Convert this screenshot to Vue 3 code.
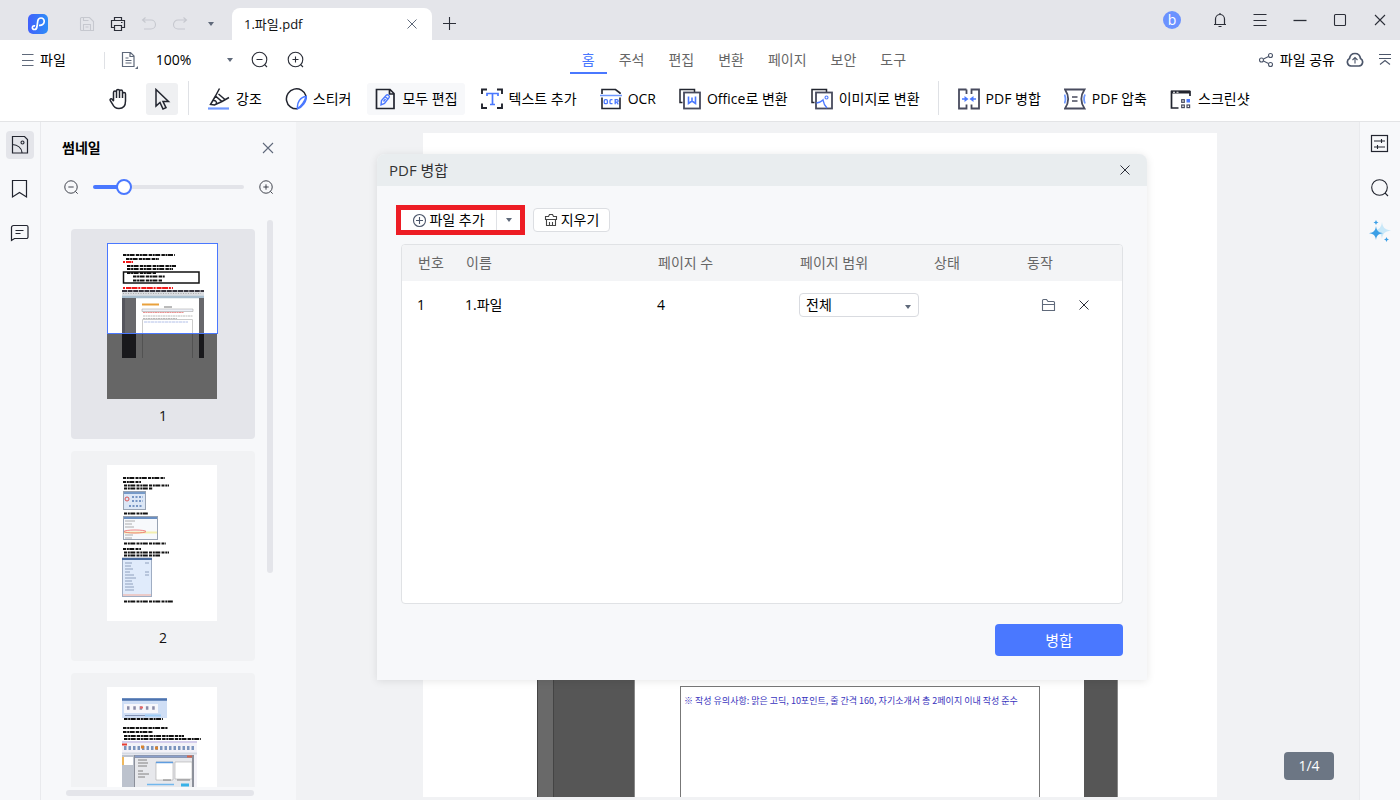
<script setup>
import { h, ref, computed } from 'vue'

const icons = {
  logo: '<defs><linearGradient id="lg" x1="0" y1="0" x2="1" y2="0"><stop offset="0" stop-color="#4160fb"/><stop offset="1" stop-color="#2d8df8"/></linearGradient></defs><rect width="20" height="20" rx="5" fill="url(#lg)" stroke="none"/><path d="M11 11.300c2.800.4 5-1.200 5.200-3.600.2-2.200-1.300-3.700-3.200-3.700-1.800 0-2.900 1.100-3.200 2.900L8.900 13c-.3 1.700-1.200 2.600-2.600 2.500-1.300-.1-2.100-1-1.900-2.100.2-1.200 1.400-1.800 2.700-1.500" stroke="#fff" stroke-width="1.700"/>',
  save: '<path d="M1.500 2.500a1 1 0 0 1 1-1h8l4 4v9h-12a1 1 0 0 1-1-1zM4.500 1.500v3h5M4.500 14.500v-6h7v6M6.500 11h3"/>',
  print: '<path d="M4.500 4.500v-3h7v3M4.500 11.500h-3v-7h13v7h-3M4.500 9.500h7v5h-7z" stroke-width="1.200"/><path d="M11 6.500h1.500"/>',
  undo: '<path d="M4.500 1.500l-3 2.500 3 2.500M1.500 4h8.500a4.500 4.500 0 0 1 0 9H3"/>',
  redo: '<path d="M11.500 1.500l3 2.500-3 2.500M14.500 4H6a4.500 4.500 0 0 0 0 9h7"/>',
  caret: '<path d="M1 2h6L4 6z" fill="currentColor" stroke="none"/>',
  close: '<path d="M3.500 3.500l9 9M12.500 3.500l-9 9" stroke-width="1"/>',
  closeLg: '<path d="M3 3l10 10M13 3L3 13"/>',
  plus: '<path d="M7.500 1v13M1 7.500h13"/>',
  bell: '<path d="M2 12.500h12M3.500 12.500V7a4.500 4.500 0 0 1 9 0v5.500M8 2.500V1M6.500 14.500h3" stroke-width="1.200"/>',
  menu: '<path d="M1.500 2.500h13M1.500 8.500h13M1.500 13.500h13" stroke-width="1.100"/>',
  menuSm: '<path d="M2 2.500h11.500M2 8.500h11.500M2 13.500h11.500"/>',
  min: '<path d="M1.500 8.500h13" stroke-width="1.300"/>',
  max: '<rect x="2.500" y="2.500" width="11" height="11" rx="1"/>',
  doc: '<path d="M1.500 1.500h8l3.500 3.500v10.500h-11.500zM9 1.500V5.500h4M4.500 7h3M4.500 9.500h6M4.500 12h6" stroke-width="1.200"/><path d="M17 15v3h-3z" fill="currentColor" stroke="none"/>',
  zoomOut: '<circle cx="8.500" cy="8.500" r="7.300"/><path d="M5.500 8.500h6M13.500 13.500l2.500 2.500"/>',
  zoomIn: '<circle cx="8.500" cy="8.500" r="7.300"/><path d="M5.500 8.500h6M8.500 5.500v6M13.500 13.500l2.500 2.500"/>',
  share: '<circle cx="3.500" cy="8" r="2"/><circle cx="12.500" cy="3.500" r="2"/><circle cx="12.500" cy="12.500" r="2"/><path d="M5.500 7l5-2.500M5.500 9l5 2.500"/>',
  cloud: '<path d="M5 15a4 4 0 0 1-1.500-7.500C4 4.300 6.300 2.500 9 2.500s5 1.800 5.500 5A4 4 0 0 1 13 15z" stroke-width="1.700"/><path d="M9 12.500V7M6.500 9L9 6.500 11.500 9"/>',
  collapse: '<path d="M2 2.500h12M2 6.500h12M3 12.500l5-4 5 4"/>',
  hand: '<path d="M5.500 13V4.500a1.500 1.500 0 0 1 3 0V10M8.500 9V3a1.500 1.500 0 0 1 3 0v7M11.500 9V3.500a1.500 1.500 0 0 1 3 0V10M14.500 9V6a1.500 1.500 0 0 1 3 0v7c0 4.500-2 7.500-6.500 7.500-3.500 0-5.500-2-6.500-4.500l-2.300-3.500c-.6-1.600 1-2.300 2-1.200l1.500 2" stroke-width="1.500"/>',
  cursor: '<path d="M5 1.500v16.500l4-3.500 3 6.500 3-1.300-3-6.200h5.500z" stroke-width="1.500"/>',
  highlight: '<path d="M11.500.500L7.500 8l6.500 5.500L21 9.500M7.500 8l-5 8.500 4 .5 7.500-3.500M10.500 6l7 6M5 12.500c2.500-.5 4.500 1.500 3 4" stroke-width="1.500"/><path d="M0 20.500h21" stroke="#6f98ff" stroke-width="2.200"/>',
  sticker: '<path d="M21 8A10 10 0 1 0 12.500 20.800" stroke-width="1.500"/><path d="M21.500 8.500c0 5-4.500 11-9 12.300-.8-5.800 2.500-12 9-12.300zM21 9c-1.500 4.500-4.500 9-8.500 11.500" stroke="#4a78ff" stroke-width="1.500"/>',
  editAll: '<path d="M2.500 1.500h13.500l4 4v15h-17.500zM15.500 1.500v4.500h4.500" stroke-width="1.700"/><path d="M7 17l.5-4.500 5-5.500c1-1 3.500 1 2.700 2.300L10.500 15.500zM11 8.500l3.500 3M9.500 13.500l2-2.500" stroke="#4a78ff" stroke-width="1.400"/>',
  text: '<path d="M1 6V1.500h5M16 1.500h5V6M21 15.500V20h-5M6 20H1v-4.500" stroke-width="1.900"/><path d="M6 8V5.500h11V8M11.500 5.500v11M9 16.500h5" stroke="#4a78ff" stroke-width="1.700"/>',
  ocr: '<path d="M2 6V1.500h13.500L20 5v1M2 9.500V20.500h18V9.500" stroke-width="1.600"/><path d="M0 7.500h22" stroke="#6f98ff" stroke-width="1.500"/><g stroke="#4a78ff" stroke-width="1.300"><rect x="4.200" y="11.700" width="3.200" height="4" rx="1.200"/><path d="M12.500 11.700h-1.500q-1 0-1 1v2q0 1 1 1h1.500M15.200 16.300v-4.600h1.800q1.200.1 1.200 1.200t-1.200 1.200h-1.800M16.600 14.200l1.700 2.100"/></g>',
  office: '<path d="M3.500 14.500H1v-13h14.500V4" stroke-width="1.500"/><rect x="5" y="4.500" width="16" height="16" stroke="#484b5e" stroke-width="1.800"/><path d="M9.500 8.500v7l3.500-2.500 3.500 2.500v-7M13 13V9.500" stroke="#4a78ff" stroke-width="1.600"/>',
  image: '<path d="M3.500 14.500H1v-13h14.500V4" stroke-width="1.500"/><rect x="5" y="4.500" width="16" height="16" stroke="#484b5e" stroke-width="1.800"/><path d="M5.500 15c3-.5 5-1.500 6.500-3 .5 3 1.500 5.500 4 8" stroke="#4a78ff" stroke-width="1.400"/><circle cx="15.500" cy="9.500" r="1.500" stroke="#4a78ff"/>',
  merge: '<path d="M8.500 1.500H1v19h7.500v-4M8.500 6V1.500M13.500 6V1.500H21v19h-7.500v-4" stroke="#484b5e" stroke-width="1.800"/><path d="M4 11h4M18 11h-4" stroke="#4a78ff" stroke-width="1.600"/><path d="M6.500 8l4 3-4 3zM15.500 8l-4 3 4 3z" fill="#4a78ff" stroke="none"/>',
  compress: '<path d="M1 1.500h19.500c-4 6-4 13 0 19H1c4-6 4-13 0-19z" stroke="#484b5e" stroke-width="1.800"/><path d="M8 9h5.500M8 13h5.500" stroke="#484b5e" stroke-width="1.500"/><path d="M.5 6.500c1.300 3 1.300 6 0 9M21 6.500c-1.300 3-1.300 6 0 9" stroke="#6f98ff" stroke-width="1.800"/>',
  screenshot: '<path d="M8.500 20H1.500V3.500h18.500V8" stroke-width="1.700"/><path d="M1 4h19" stroke-width="3"/><path d="M3 4.200h2M6.500 4.200h2" stroke="#fff"/><g stroke="#484b5e" stroke-width="1.200"><rect x="11.700" y="11.700" width="2.600" height="2.600"/><rect x="11.700" y="17" width="2.600" height="2.600"/><rect x="17" y="17" width="2.600" height="2.600"/></g><path d="M16.500 11h3.500v3.500h-3.500z" fill="#4a78ff" stroke="none"/>',
  thumbs: '<path d="M2.500 1.500h12l3 3v13.500h-15zM2.500 9.500c5 .5 9 3.500 9.500 8" stroke-width="1.200"/><circle cx="12.500" cy="7.500" r="1.500"/>',
  bookmark: '<path d="M2.500 1.500h14v16.500l-7-4.500-7 4.500z" stroke-width="1.200"/>',
  comment: '<path d="M1.500 17.500v-13a2 2 0 0 1 2-2h13a1.500 1.500 0 0 1 1.500 1.500v10a1.500 1.500 0 0 1-1.500 1.500h-12zM5.500 7.500h8M5.500 10.500h5" stroke-width="1.200"/>',
  props: '<rect x="1.500" y="1.500" width="16" height="16" stroke-width="1.200"/><path d="M4 7h11M11.500 5v4M4 13h11M7.500 11v4"/>',
  search: '<circle cx="9.500" cy="9.500" r="7.800"/><path d="M15 15l3 3"/>',
  sparkle: '<path d="M14 2c.8 5.500 2.500 7.500 9 8.500-6.500 1-8.200 3-9 8.500-.8-5.500-2.500-7.500-8-8.500 5.500-1 7.200-3 8-8.500z" fill="#c9e8f8" stroke="none"/><path d="M8 6c.6 4.500 2 6.500 7 7.200-5 .8-6.400 2.500-7 6.800-.6-4.300-2-6-7-6.800 5-.7 6.400-2.700 7-7.200zM8 0l.8 1.700 1.700.8-1.700.8L8 5l-.8-1.700-1.700-.8 1.700-.8zM18.500 17l.8 1.700 1.700.8-1.700.8-.8 1.700-.8-1.700-1.700-.8 1.700-.8z" fill="#3b9fe6" stroke="none"/>',
  addFile: '<circle cx="7.500" cy="7.500" r="6"/><path d="M4 7.500h7M7.500 4v7"/>',
  clear: '<path d="M2.500 6.500h9v6h-9zM1.500 6.500v-3h3l1-2h3l1 2h3v3zM5.500 9v3.500M8.500 9v3.500"/>',
  folder: '<path d="M1.500 12.500v-10a1 1 0 0 1 1-1h3l1.500 2h5.500a1 1 0 0 1 1 1v8zM1.500 6.500h12"/>'
}

const Icon = (p) =>
  h('svg', {
    width: p.size,
    height: p.size,
    viewBox: `0 0 ${p.size} ${p.size}`,
    fill: 'none',
    stroke: 'currentColor',
    'stroke-width': 1.1,
    'aria-hidden': 'true',
    innerHTML: icons[p.name]
  })
Icon.props = ['name', 'size']

const tabs = ['홈', '주석', '편집', '변환', '페이지', '보안', '도구']
const editTools = [
  ['highlight', '강조'],
  ['sticker', '스티커'],
  ['editAll', '모두 편집'],
  ['text', '텍스트 추가'],
  ['ocr', 'OCR'],
  ['office', 'Office로 변환'],
  ['image', '이미지로 변환']
]
const fileTools = [
  ['merge', 'PDF 병합'],
  ['compress', 'PDF 압축'],
  ['screenshot', '스크린샷']
]
const zoom = ref(17)
const track = computed(() => ({
  background: `linear-gradient(to right, #4a78ff ${zoom.value}%, #e3e4e9 ${zoom.value}%)`
}))
const range = ref('all')

/* miniature text lines: x, y, length, colour */
const lines1 = [
  [16, 12, 52], [19, 16, 33], [20, 23, 49], [20, 26, 46], [20, 30, 29], [26, 33.500, 32], [26, 37.500, 29]
]
const red1 = [[16, 19, 10], [16, 45, 50]]
const lines2 = [
  [16, 13, 42], [16, 17, 18], [17, 20.500, 45], [17, 23.500, 29], [17, 48.500, 24], [17, 78.500, 42],
  [16, 84, 18], [17, 87.500, 45], [17, 90.500, 36], [17, 136.500, 49]
]
const lines3 = [[17, 32, 39], [16, 41, 45], [16, 45, 30], [17, 49, 60], [17, 52, 77]]
</script>

<template>
  <div class="app">
    <header class="titlebar">
      <Icon class="logo" name="logo" :size="20" />
      <div class="quick">
        <button class="ib off" aria-label="저장"><Icon name="save" :size="16" /></button>
        <button class="ib" aria-label="인쇄"><Icon name="print" :size="16" /></button>
        <button class="ib off" aria-label="실행 취소"><Icon name="undo" :size="16" /></button>
        <button class="ib off" aria-label="다시 실행"><Icon name="redo" :size="16" /></button>
        <button class="ib slate" aria-label="더 보기"><Icon name="caret" :size="8" /></button>
      </div>
      <div class="doc-tab">
        <span>1.파일.pdf</span>
        <button class="ib slate" aria-label="탭 닫기"><Icon name="close" :size="16" /></button>
      </div>
      <button class="ib new-tab" aria-label="새 탭"><Icon name="plus" :size="16" /></button>
      <div class="window">
        <button class="avatar">b</button>
        <button class="ib" aria-label="알림"><Icon name="bell" :size="16" /></button>
        <button class="ib" aria-label="메뉴"><Icon name="menu" :size="16" /></button>
        <button class="ib" aria-label="최소화"><Icon name="min" :size="16" /></button>
        <button class="ib" aria-label="최대화"><Icon name="max" :size="16" /></button>
        <button class="ib" aria-label="닫기"><Icon name="closeLg" :size="16" /></button>
      </div>
    </header>

    <div class="menubar">
      <button class="file slate"><Icon name="menuSm" :size="16" /><span>파일</span></button>
      <i class="sep short"></i>
      <button class="ib slate" aria-label="페이지 보기"><Icon name="doc" :size="18" /></button>
      <button class="zoom-value"><span>100%</span><Icon name="caret" :size="8" /></button>
      <button class="ib" aria-label="축소"><Icon name="zoomOut" :size="18" /></button>
      <button class="ib" aria-label="확대"><Icon name="zoomIn" :size="18" /></button>
      <nav class="tabs">
        <a v-for="(t, i) in tabs" :key="t" href="#" :class="{ on: i === 0 }">{{ t }}</a>
      </nav>
      <div class="share slate">
        <button class="tool"><Icon name="share" :size="16" /><span>파일 공유</span></button>
        <button class="ib" aria-label="클라우드"><Icon name="cloud" :size="18" /></button>
        <button class="ib" aria-label="접기"><Icon name="collapse" :size="16" /></button>
      </div>
    </div>

    <div class="toolbar">
      <button class="mode" aria-label="손 도구"><Icon name="hand" :size="22" /></button>
      <button class="mode on" aria-label="선택 도구"><Icon name="cursor" :size="22" /></button>
      <i class="sep"></i>
      <div class="tools">
        <button v-for="[icon, label] in editTools" :key="icon" class="tool" :class="{ lit: icon === 'editAll' }">
          <Icon :name="icon" :size="22" /><span>{{ label }}</span>
        </button>
      </div>
      <i class="sep"></i>
      <div class="tools">
        <button v-for="[icon, label] in fileTools" :key="icon" class="tool">
          <Icon :name="icon" :size="22" /><span>{{ label }}</span>
        </button>
      </div>
    </div>

    <main class="body">
      <aside class="rail">
        <button class="on" aria-label="썸네일"><Icon name="thumbs" :size="20" /></button>
        <button aria-label="책갈피"><Icon name="bookmark" :size="20" /></button>
        <button aria-label="댓글"><Icon name="comment" :size="20" /></button>
      </aside>

      <section class="panel">
        <div class="panel-head">
          <h2>썸네일</h2>
          <button class="ib slate" aria-label="패널 닫기"><Icon name="closeLg" :size="16" /></button>
        </div>
        <div class="slider">
          <button class="ib" aria-label="썸네일 축소"><svg width="16" height="16" viewBox="0 0 18 18" fill="none" stroke="currentColor"><circle cx="9" cy="9" r="7" /><path d="M6 9h6M14 14l2.500 2.500" /></svg></button>
          <input v-model="zoom" type="range" min="0" max="100" aria-label="썸네일 크기" :style="track" />
          <button class="ib" aria-label="썸네일 확대"><svg width="16" height="16" viewBox="0 0 18 18" fill="none" stroke="currentColor"><circle cx="9" cy="9" r="7" /><path d="M6 9h6M9 6v6M14 14l2.500 2.500" /></svg></button>
        </div>
        <div class="thumbs">
          <div class="card on">
            <svg class="mini" width="112" height="156" viewBox="0 0 112 156">
              <rect width="110" height="156" fill="#fff" />
              <g stroke="#111" stroke-width="2" stroke-dasharray="3.500 .6 2 .5 5 1.200">
                <path v-for="l in lines1" :key="l[1]" :d="`M${l[0]} ${l[1]}h${l[2]}`" />
              </g>
              <g stroke="#f01818" stroke-width="2.200" stroke-dasharray="2 1 5 .5 6 .8">
                <path v-for="l in red1" :key="l[1]" :d="`M${l[0]} ${l[1]}h${l[2]}`" />
              </g>
              <rect x="16.500" y="29" width="75.500" height="11" fill="none" stroke="#111" stroke-width="1.500" />
              <rect x="15" y="47" width="82" height="68" fill="#fff" />
              <path d="M15 48h82" stroke="#393842" stroke-width="2" stroke-dasharray="5 .6" />
              <path d="M15 51h82" stroke="#dadde2" stroke-width="4" />
              <path d="M16 50.500h78" stroke="#aaa" stroke-width="1" stroke-dasharray="1 1.500" />
              <path d="M15 54h82" stroke="#a9bfd0" stroke-width="2.500" />
              <path d="M15 55h14v60H15z" fill="#55555d" />
              <path d="M18 55h11v60H18zM92 55h5v60h-5z" fill="#68686c" />
              <path d="M15 91h14v24H15zM92 91h5v24h-5z" fill="#403f46" />
              <path d="M35 61.500h17" stroke="#e9a13c" stroke-width="2" />
              <path d="M57 64h8" stroke="#777" />
              <path d="M35 66h51v2.500H35z" fill="#eef1fa" stroke="#999" stroke-width=".5" />
              <path d="M36 69.500h41" stroke="#e57777" stroke-width=".8" stroke-dasharray="2 .4" />
              <path d="M36 73h50M36 75.500h34" stroke="#aaa" stroke-width=".8" stroke-dasharray="2 .5" />
              <path d="M35.500 115V76.500h50V115" fill="none" stroke="#ccc" />
              <path d="M37 79h44" stroke="#9fb0e3" stroke-width=".8" stroke-dasharray="3 .5" />
              <path d="M0 91h110v65H0z" fill="#000" opacity=".6" />
              <rect x=".5" y=".5" width="110" height="90" fill="none" stroke="#4a78ff" />
            </svg>
            <span>1</span>
          </div>
          <div class="card">
            <svg class="mini" width="112" height="156" viewBox="0 0 112 156">
              <rect width="110" height="156" fill="#fff" />
              <g stroke="#111" stroke-width="2" stroke-dasharray="3 .8 2 .5 5 1.200">
                <path v-for="l in lines2" :key="l[1]" :d="`M${l[0]} ${l[1]}h${l[2]}`" />
              </g>
              <rect x="16.500" y="26.500" width="22" height="18" fill="#dce7f6" stroke="#98a3b3" />
              <path d="M17 28h21" stroke="#5580b8" stroke-width="1.500" />
              <path d="M25 32h11M25 36h11M22 41h14" stroke="#7695c4" stroke-dasharray="2 1.500" stroke-width="2" />
              <circle cx="20" cy="34" r="2" fill="none" stroke="#d55" />
              <rect x="16.500" y="51.500" width="34" height="23" fill="#f7f9fc" stroke="#98a3b3" />
              <path d="M17 53h33" stroke="#6a8fc2" stroke-width="2" />
              <path d="M18 56h10M18 59h7M18 62h9M18 70h8M18 73h7" stroke="#999" stroke-width=".8" />
              <path d="M17 67.500h33" stroke="#f3efb0" stroke-width="2" />
              <ellipse cx="28" cy="66.500" rx="11" ry="1.500" fill="none" stroke="#e66" stroke-width=".8" />
              <rect x="15.500" y="93" width="29" height="38.500" fill="#e0ebfb" stroke="#9fadc3" />
              <path d="M15 94h30" stroke="#47699c" stroke-width="2" />
              <path d="M18 98h7M18 101h6M18 104h8M18 107h5M18 110h9M18 113h11M18 116h7M18 119h8M18 122h9M18 125h9M38 98h4M38 107h4M38 110h4" stroke="#8797b5" stroke-width=".9" />
              <path d="M16 130h28" stroke="#efc0b8" stroke-width="1.500" />
            </svg>
            <span>2</span>
          </div>
          <div class="card">
            <svg class="mini" width="112" height="156" viewBox="0 0 112 156">
              <rect width="110" height="156" fill="#fff" />
              <rect x="15" y="11" width="45" height="20" fill="#cfdef5" />
              <path d="M15 12.500h45" stroke="#4d73ae" stroke-width="2.500" />
              <rect x="17" y="17" width="34" height="9" fill="#f7f7fb" />
              <path d="M20 21h28" stroke="#8a8ca8" stroke-width="3.500" stroke-dasharray="2.500 3.800" />
              <path d="M33 20.500h3" stroke="#e66" stroke-width="2" />
              <path d="M18 28.500h20" stroke="#8494b5" /><path d="M38 28.500h16" stroke="#9ccbf5" stroke-width="2" />
              <g stroke="#111" stroke-width="2" stroke-dasharray="3.500 .7 2 .5 5 1">
                <path v-for="l in lines3" :key="l[1]" :d="`M${l[0]} ${l[1]}h${l[2]}`" />
              </g>
              <rect x="15" y="54" width="75" height="102" fill="#f3f2f8" />
              <path d="M15 55h75" stroke="#d4cdec" stroke-width="2" /><path d="M15 57.500h5" stroke="#e53e32" stroke-width="2" />
              <path d="M17 61h70" stroke="#7c94bd" stroke-width="4" stroke-dasharray="2.500 2" />
              <path d="M34 60h3M48 61h3" stroke="#d9822e" stroke-width="3" />
              <path d="M15 66.500h75" stroke="#d5dae3" stroke-width="2" />
              <path d="M15 68h12v88H15z" fill="#bcc2cd" /><path d="M15 70h11v8H15z" fill="#fff" /><path d="M15 70h2v8h-2z" fill="#eeb85e" />
              <path d="M27 68h60v88H27z" fill="#8b8f9a" /><path d="M28 69.500h57" stroke="#8b9fca" stroke-width="2" />
              <path d="M80 69.500h5" stroke="#d9654a" stroke-width="2" />
              <path d="M28 71h57v85H28z" fill="#e7e8ec" />
              <path d="M49 75h17v18H49zM68 75h17v17H68z" fill="#fff" stroke="#999" stroke-width=".5" />
              <path d="M49 75.500h17" stroke="#5e9de0" stroke-width="1.500" />
              <path d="M31 73h9M31 76h10M31 79h9M31 84h5M31 87h11M31 90h7M56 93h8M70 93h13" stroke="#777" stroke-width=".9" />
              <path d="M40 97.500h27" stroke="#71b7ed" stroke-width="1.500" /><path d="M74 98h8" stroke="#38b2e8" stroke-width="3" />
            </svg>
          </div>
        </div>
        <i class="vbar"></i>
        <i class="hbar"></i>
      </section>

      <section class="canvas">
        <div class="page">
          <div class="shot">
            <i class="ruler"></i><i class="dark left"></i>
            <p>※ 작성 유의사항: 맑은 고딕, 10포인트, 줄 간격 160, 자기소개서 총 2페이지 이내 작성 준수</p>
            <i class="dark right"></i>
          </div>
        </div>
        <div class="pager">1/4</div>
      </section>

      <aside class="rail end">
        <button aria-label="속성"><Icon name="props" :size="19" /></button>
        <button aria-label="검색"><Icon name="search" :size="19" /></button>
        <button aria-label="AI"><Icon name="sparkle" :size="23" /></button>
      </aside>

      <div class="dialog" role="dialog" aria-labelledby="dlg-title">
        <div class="dlg-head">
          <h1 id="dlg-title">PDF 병합</h1>
          <button class="ib" aria-label="대화 상자 닫기"><Icon name="close" :size="16" /></button>
        </div>
        <div class="dlg-body">
          <div class="actions">
            <div class="split">
              <button class="add"><Icon name="addFile" :size="15" /><span>파일 추가</span></button>
              <button class="more slate" aria-label="추가 옵션"><Icon name="caret" :size="8" /></button>
            </div>
            <button class="clear"><Icon name="clear" :size="14" /><span>지우기</span></button>
          </div>
          <div class="sheet">
            <table>
              <colgroup><col class="c1" /><col class="c2" /><col class="c3" /><col class="c4" /><col class="c5" /><col /></colgroup>
              <thead>
                <tr><th>번호</th><th>이름</th><th>페이지 수</th><th>페이지 범위</th><th>상태</th><th>동작</th></tr>
              </thead>
              <tbody>
                <tr>
                  <td>1</td>
                  <td>1.파일</td>
                  <td>4</td>
                  <td>
                    <div class="select slate">
                      <select v-model="range" aria-label="페이지 범위"><option value="all">전체</option></select>
                      <Icon name="caret" :size="8" />
                    </div>
                  </td>
                  <td></td>
                  <td>
                    <div class="row-actions">
                      <button class="ib slate" aria-label="폴더 열기"><Icon name="folder" :size="15" /></button>
                      <button class="ib" aria-label="삭제"><Icon name="close" :size="16" /></button>
                    </div>
                  </td>
                </tr>
              </tbody>
            </table>
          </div>
          <div class="foot"><button class="primary">병합</button></div>
        </div>
      </div>
    </main>
  </div>
</template>

<style>
body { overflow: hidden; }
</style>

<style scoped>
* { box-sizing: border-box; }
.app {
  height: 100vh; display: flex; flex-direction: column; background: #fff; color: #111;
  font: 14px/20px "Open Sans", "Noto Sans CJK KR", sans-serif;
}
button, select { font: inherit; color: inherit; background: none; border: 0; padding: 0; }
button { display: flex; align-items: center; justify-content: center; white-space: nowrap; }
svg { flex: none; display: block; }
.ib { width: 20px; height: 20px; flex: none; color: #2b2e38; }
.ib.slate, .slate { color: #5f697a; }
.slate .ib { color: #4c566a; }
.ib.off { color: #c6c8cf; }
h1, h2, p { margin: 0; font-weight: 400; }

.titlebar { height: 40px; flex: none; display: flex; align-items: center; background: #e4e5ea; padding-left: 28px; }
.logo { margin-top: 7px; }
.quick { display: flex; align-items: center; gap: 11px; margin: 8px 0 0 29px; }
.doc-tab {
  align-self: flex-end; width: 200px; height: 32px; margin-left: 11px; padding: 0 10px 0 12px; border-radius: 8px 8px 0 0;
  background: #fff; display: flex; align-items: center; justify-content: space-between; font-size: 13px;
}
.new-tab { margin: 7px 0 0 8px; }
.window { margin-left: auto; display: flex; align-items: center; }
.window .ib { width: 40px; height: 40px; }
.avatar { width: 18px; height: 18px; border-radius: 9px; background: #6b92ff; color: #fff; font-size: 14px; line-height: 18px; margin-right: 19px; }

.menubar { height: 40px; flex: none; display: flex; align-items: center; padding: 0 5px 0 20px; }
.file { gap: 4px; }
.file span, .tool span { color: #000; }
.sep { width: 1px; height: 34px; background: #dfe1e5; flex: none; }
.sep.short { height: 17px; margin: 0 15px 0 38px; }
.zoom-value { width: 78px; justify-content: space-between; margin: 0 16px; color: #000; }
.zoom-value svg { color: #5f697a; }
.zoom-value + .ib { margin-right: 16px; }
.tabs { display: flex; height: 34px; margin: 0 auto 0 264px; align-self: flex-start; }
.tabs a {
  padding: 10px 12px 0; color: #666; text-decoration: none; border-bottom: 2px solid transparent; white-space: nowrap;
}
.tabs a.on { color: #4a78ff; border-color: #4a78ff; }
.share { display: flex; align-items: center; gap: 10px; }

.toolbar { height: 42px; flex: none; display: flex; align-items: flex-start; padding: 1px 0 0 103px; border-bottom: 1px solid #e3e4e6; }
.mode { width: 32px; height: 32px; margin: 2px 11px 0 0; border-radius: 3px; color: #22252f; }
.mode.on { background: #eff0f2; margin-right: 10px; }
.tools { display: flex; margin: 2px 11px 0 12px; gap: 9px; }
.tool { gap: 6px; padding: 0 7px; height: 32px; border-radius: 3px; color: #22252f; }
.tool.lit { background: #f7f8fa; }
.share .tool { padding: 0; color: #4c566a; }

.body { flex: 1; min-height: 0; display: flex; position: relative; background: #f1f2f4; }
.rail { width: 41px; flex: none; background: #f7f8fa; border-right: 1px solid #e9eaed; display: flex; flex-direction: column; align-items: center; gap: 16px; padding-top: 9px; }
.rail button { width: 28px; height: 28px; border-radius: 4px; color: #22252f; }
.rail button.on { background: #e4e5ea; }
.rail.end { border: 0; border-left: 1px solid #e9eaed; padding: 7px 2px 0 0; }

.panel { width: 255px; flex: none; background: #f7f8fa; display: flex; flex-direction: column; position: relative; }
.panel-head { display: flex; justify-content: space-between; align-items: center; padding: 16px 18px 0 21px; }
.panel-head h2 { font-size: 14px; font-weight: 700; line-height: 20px; color: #000; }
.slider { display: flex; align-items: center; gap: 12px; margin: 19px 20px 0; height: 20px; }
.slider input { appearance: none; flex: 1; min-width: 0; height: 4px; margin: 0; border-radius: 2px; }
.slider input::-webkit-slider-thumb { appearance: none; width: 16px; height: 16px; border-radius: 8px; border: 2px solid #4a78ff; background: #fff; }
.thumbs { flex: 1; min-height: 0; overflow: hidden; margin: 32px 0 13px 30px; display: flex; flex-direction: column; gap: 12px; }
.card { width: 184px; height: 210px; flex: none; border-radius: 4px; background: #f1f2f4; display: flex; flex-direction: column; align-items: center; padding-top: 14px; }
.card.on { background: #e4e5ea; }
.card span { margin-top: 7px; }
.vbar, .hbar { position: absolute; background: #e4e5ea; border-radius: 3px; }
.vbar { right: 23px; top: 98px; width: 6px; height: 353px; }
.hbar { left: 25px; bottom: 4px; width: 188px; height: 6px; }

.canvas { flex: 1; min-width: 0; position: relative; padding: 11px 142px 3px 127px; display: flex; }
.page { flex: 1; background: #fff; display: flex; padding: 540px 99px 0 114px; overflow: hidden; }
.shot { flex: 1; display: flex; }
.ruler { width: 16px; background: #696969; border-left: 1px solid #444; }
.dark { background: #565656; border-right: 1px solid #888; }
.dark.left { width: 82px; border-left: 1px solid #444; }
.dark.right { width: 34px; }
.shot p { flex: 1; margin: 13px 44px 0 45px; border: 1px solid #777; border-bottom: 0; padding: 5px 3px; font: 9px/18px "Noto Sans CJK KR", sans-serif; color: #3934bd; white-space: nowrap; }
.pager { position: absolute; right: 25px; bottom: 20px; width: 50px; height: 28px; border-radius: 4px; background: #6c7684; color: #fff; text-align: center; line-height: 28px; }

.dialog { position: absolute; left: 377px; top: 32px; width: 770px; background: #f7f8fa; border-radius: 8px 8px 0 0; box-shadow: 0 1px 8px rgba(0, 0, 0, .1); }
.dlg-head { height: 32px; display: flex; align-items: center; justify-content: space-between; padding: 0 12px; background: #e9edef; border-radius: 8px 8px 0 0; }
.dlg-head h1 { font-size: 15px; line-height: 20px; color: #333; }
.dlg-body { padding: 22px 24px 24px; }
.actions { display: flex; gap: 13px; }
.split { display: flex; width: 119px; height: 24px; background: #fff; position: relative; }
.split::after { content: ""; position: absolute; inset: -3px -5px; border: 5px solid #ed1c24; pointer-events: none; }
.add { flex: 1; gap: 2px; color: #4c566a; }
.add span, .clear span { color: #000; }
.more { width: 24px; border-left: 1px solid #dfe1e5; }
.clear { width: 77px; height: 24px; gap: 3px; border: 1px solid #dcdee2; border-radius: 4px; background: #fff; color: #444; }
.sheet { height: 360px; margin-top: 12px; border: 1px solid #e0e2e5; border-radius: 4px; background: #fff; overflow: hidden; }
table { width: 100%; table-layout: fixed; border-collapse: collapse; }
.c1 { width: 48px; } .c2 { width: 192px; } .c3 { width: 142px; } .c4 { width: 134px; } .c5 { width: 93px; }
th { height: 36px; background: #f3f4f6; color: #666; font-weight: 400; text-align: left; padding: 0 0 0 16px; }
td { height: 48px; padding: 0 0 0 15px; color: #000; }
.select { position: relative; width: 120px; }
.select select { appearance: none; display: block; width: 100%; height: 24px; padding: 0 6px; border: 1px solid #d9dbe0; border-radius: 4px; color: #000; background: #fff; }
.select svg { position: absolute; right: 7px; top: 10px; }
.row-actions { display: flex; gap: 16px; padding-left: 12px; }
.foot { display: flex; justify-content: flex-end; margin-top: 20px; }
.primary { width: 128px; height: 32px; border-radius: 4px; background: #4a78ff; color: #fff; font-size: 15px; }
</style>
